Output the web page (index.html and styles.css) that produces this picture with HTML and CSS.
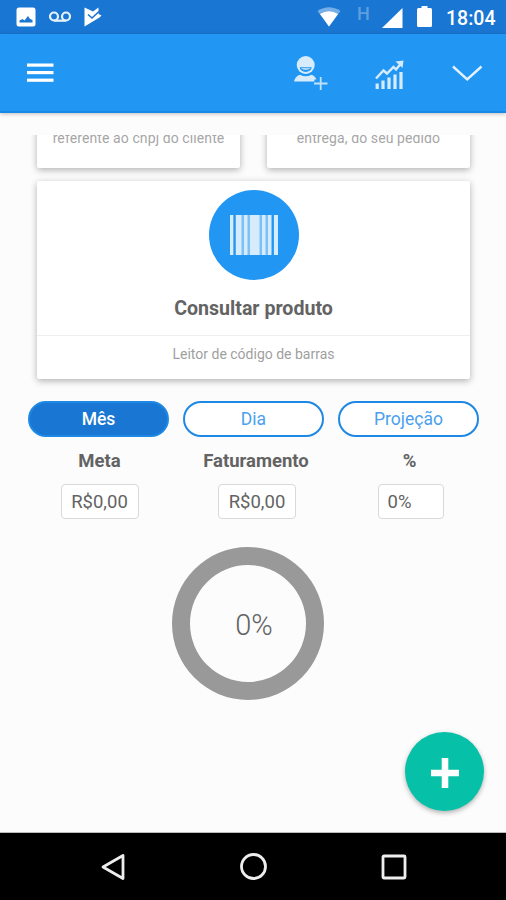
FILE: index.html
```html
<!DOCTYPE html>
<html lang="pt-BR">

  <head>
    <meta charset="UTF-8">
    <meta name="viewport" content="width=device-width, initial-scale=1.0">
    <title>Consultar produto</title>
    <link rel="stylesheet" href="styles.css">
  </head>

  <body>
    <div class="status-bar">
      <div class="status-left">
        <svg width="20" height="20" viewBox="0 0 20 20">
          <rect x="0.5" y="0.5" width="19" height="19" rx="2.5" fill="#fff"/>
          <path d="M3.5 15.5v-2L6.500 12l2 1.500L12 9l2 3 2.500 1v2.500z" fill="#1976d2"/>
        </svg>
        <svg width="22" height="12" viewBox="0 0 22 12" fill="none" stroke="#e8f2fc" stroke-width="2.200">
          <circle cx="5" cy="5.500" r="4"/>
          <circle cx="17" cy="5.500" r="4"/>
          <path d="M5 9.700h12"/>
        </svg>
        <svg width="18" height="20" viewBox="0 0 18 20">
          <path d="M0.500 0.500L9 4.500L14.500 0.500V7L17.500 8.500L15.500 10.500L0.500 19.500z" fill="#fff"/>
          <path d="M4 7.500l4 3.500L15 4.500" fill="none" stroke="#1976d2" stroke-width="1.600"/>
        </svg>
      </div>
      <div class="status-right">
        <svg width="24" height="20" viewBox="0 0 24 20">
          <path d="M0.500 4Q12-3.500 23.500 4L12 19.500z" fill="#75aee6"/>
          <path d="M3 7Q12 1.500 21 7L12 19.500z" fill="#fff"/>
        </svg>
        <span class="network">H</span>
        <svg class="signal" width="21" height="20" viewBox="0 0 21 20">
          <path d="M20.500 0V20H0z" fill="#fff"/>
        </svg>
        <svg class="battery" width="15" height="21" viewBox="0 0 15 21">
          <path d="M4.500 0h6v2H13.500a1.500 1.500 0 0 1 1.500 1.500V19.500a1.500 1.500 0 0 1-1.500 1.500H1.500A1.500 1.500 0 0 1 0 19.500V3.500A1.500 1.500 0 0 1 1.500 2H4.500z" fill="#fff"/>
        </svg>
        <span class="clock">18:04</span>
      </div>
    </div>

    <header>
      <svg width="27" height="20" viewBox="0 0 27 20" fill="#fff">
        <rect y="0.500" width="26.500" height="3.200"/>
        <rect y="8" width="26.500" height="3.200"/>
        <rect y="15.600" width="26.500" height="3.200"/>
      </svg>
      <div class="actions">
        <svg width="34" height="36" viewBox="0 0 34 36">
          <circle cx="11.700" cy="10" r="9" fill="#d6ecfd"/>
          <path d="M5.700 12.200h12a6 4.800 0 0 1-12 0z" fill="#2196f3"/>
          <path d="M6.700 13.200h10q-5 3.200-10 0z" fill="#d6ecfd"/>
          <path d="M0 26.500q1-5 6-6.800q5.700 3 11.400 0q4 1.500 5 4.800h-2v2z" fill="#d6ecfd"/>
          <path d="M20 28.500h13.500M26.700 22v13" stroke="#bfe1fc" stroke-width="1.800"/>
        </svg>
        <svg class="chart-icon" width="29" height="30" viewBox="0 0 29 30">
          <path d="M1 18.500L8.500 10.500L12 13.500L18.500 7L21 9.500L26 3.500" fill="none" stroke="#d6ecfd" stroke-width="2.400"/>
          <path d="M20.500 1.500L28.500 0.500L27.500 8z" fill="#d6ecfd"/>
          <path d="M2.200 23.500V29M8 20.500V29M14 17.500V29M20 14.500V29M26 12V29" stroke="#d6ecfd" stroke-width="3.200"/>
        </svg>
        <svg class="chevron" width="31" height="17" viewBox="0 0 31 17">
          <path d="M1 1.500L15.200 14.500L29.500 1.500" fill="none" stroke="#e3f2fe" stroke-width="2.400"/>
        </svg>
      </div>
    </header>

    <main>
      <section class="cards">
        <div class="card-row">
          <div class="card small">referente ao cnpj do cliente</div>
          <div class="card small">entrega, do seu pedido</div>
        </div>
        <div class="card product">
          <div class="barcode">
            <svg width="48" height="40" viewBox="0 0 48 40">
              <path d="M0 0h48v40H0z" fill="#7cc0f8"/>
              <path d="M0 0h3.500v40H0zM6 0h5.500v40H6zM14 0h3.500v40H14zM20 0h9.500v40H20zM32 0h3.500v40H32zM38 0h3.300v40H38zM44 0h4v40H44z" fill="#d6ecfd"/>
              <path d="M3.500 0h2v40h-2zM41.800 0h2v40h-2z" fill="#2196f3"/>
            </svg>
          </div>
          <h2>Consultar produto</h2>
          <p>Leitor de código de barras</p>
        </div>
      </section>

      <div class="tabs">
        <button class="selected">Mês</button>
        <button>Dia</button>
        <button>Projeção</button>
      </div>

      <div class="results">
        <div class="result">
          <h3>Meta</h3>
          <div class="value">R$0,00</div>
        </div>
        <div class="result middle">
          <h3>Faturamento</h3>
          <div class="value">R$0,00</div>
        </div>
        <div class="result">
          <h3>%</h3>
          <div class="value percent">0%</div>
        </div>
      </div>

      <div class="progress"><span>0%</span></div>

      <button class="add">
        <svg width="28" height="30" viewBox="0 0 28 30">
          <path d="M0 15h28M14 0v30" stroke="#fff" stroke-width="6.600"/>
        </svg>
      </button>
    </main>

    <nav>
      <svg width="26" height="28" viewBox="0 0 26 28">
        <path d="M3 14L23 2.500V25.500z"/>
      </svg>
      <svg width="28" height="28" viewBox="0 0 28 28">
        <circle cx="13.500" cy="13.500" r="12"/>
      </svg>
      <svg width="26" height="26" viewBox="0 0 26 26">
        <rect x="2" y="2" width="22" height="22" rx="1"/>
      </svg>
    </nav>
  </body>

</html>
```
FILE: styles.css
```css
* {
  box-sizing: border-box;
}

body {
  margin: 0;
  height: 900px;
  display: flex;
  flex-direction: column;
  overflow: hidden;
  font-family: Roboto, "Liberation Sans", sans-serif;
  color: #636363;
  background-color: #fcfcfc;
}

svg {
  display: block;
  flex: none;
}

h2, h3, p {
  margin: 0;
}

button {
  font-family: inherit;
  padding: 0;
}

.status-bar {
  height: 34px;
  padding: 0 10px 0 16px;
  display: flex;
  justify-content: space-between;
  align-items: center;
  background-color: #1976d2;
}

.status-left, .status-right {
  display: flex;
  align-items: center;
}

.status-left {
  gap: 13px;
}

.network {
  width: 12px;
  margin: 0 13px 7px 16px;
  font-size: 18px;
  font-weight: 500;
  color: #5f9fe0;
}

.battery {
  margin: 0 14px 1px 14px;
}

.signal {
  margin-top: 2px;
}

.clock {
  width: 50px;
  margin-top: 2px;
  font-size: 19.5px;
  font-weight: 500;
  color: #fff;
  white-space: nowrap;
}

header {
  height: 79px;
  padding: 0 23px 0 27px;
  display: flex;
  justify-content: space-between;
  align-items: center;
  background-color: #2196f3;
  border-bottom: 2px solid #1689e6;
  box-shadow: 0 1px 4px rgba(0, 0, 0, 0.25);
}

.actions {
  display: flex;
  align-items: center;
}

.chart-icon {
  margin: 4px 48px 0 47px;
}

.chevron {
  margin-top: 2px;
}

main {
  position: relative;
  height: 720px;
  padding: 22px 27px 0 28px;
  border-bottom: 1px solid #bbb;
}

.cards {
  height: 255px;
  padding: 0 9px 11px;
  display: flex;
  flex-direction: column;
  justify-content: flex-end;
  gap: 13px;
  overflow: hidden;
}

.card-row {
  display: flex;
  gap: 27px;
}

.card {
  background-color: #fff;
  border-radius: 2px;
  box-shadow: 0 2px 7px rgba(0, 0, 0, 0.3);
  text-align: center;
}

.small {
  flex: 1;
  height: 76px;
  padding-top: 37px;
  font-size: 14px;
  line-height: 18px;
  letter-spacing: 0.1px;
  color: #a6a6a6;
  white-space: nowrap;
}

.product {
  height: 198px;
  flex: none;
  padding-top: 9px;
}

.barcode {
  width: 90px;
  height: 90px;
  margin: 0 auto;
  display: flex;
  justify-content: center;
  align-items: center;
  border-radius: 50%;
  background-color: #2196f3;
}

.product h2 {
  height: 56px;
  line-height: 58px;
  font-size: 19.6px;
  font-weight: 700;
  border-bottom: 1px solid #eee;
}

.product p {
  line-height: 37px;
  font-size: 14px;
  color: #9f9f9f;
}

.tabs {
  display: flex;
  gap: 14px;
  margin-top: 11px;
}

.tabs button {
  flex: 1;
  height: 36px;
  border: 2px solid #1e88e5;
  border-radius: 18px;
  background-color: #fff;
  font-size: 17.5px;
  color: #4b9ff0;
}

.tabs .selected {
  background-color: #1976d2;
  font-weight: 500;
  color: #fff;
}

.results {
  display: grid;
  grid-template-columns: 1fr 1fr 1fr;
  gap: 14px;
}

.result {
  display: flex;
  flex-direction: column;
  align-items: center;
  padding-left: 2px;
}

.result.middle {
  padding-left: 5px;
}

.result h3 {
  height: 47px;
  line-height: 49px;
  font-size: 18.5px;
  font-weight: 700;
}

.value {
  width: 78px;
  height: 35px;
  border: 1px solid #d9d9d9;
  border-radius: 4px;
  background-color: #fff;
  line-height: 34px;
  font-size: 18.5px;
  text-align: center;
}

.middle .value {
  margin-left: 2px;
}

.value.percent {
  width: 66px;
  margin-left: 2px;
  padding-left: 9px;
  text-align: left;
}

.progress {
  width: 152px;
  height: 153px;
  margin: 28px 0 0 144px;
  padding: 3px 0 0 12px;
  display: flex;
  justify-content: center;
  align-items: center;
  border: 18px solid #999;
  border-radius: 50%;
  font-size: 29px;
  font-weight: 300;
}

.add {
  position: absolute;
  right: 22px;
  bottom: 21px;
  width: 79px;
  height: 79px;
  display: flex;
  justify-content: center;
  align-items: center;
  padding-top: 3px;
  border: none;
  border-radius: 50%;
  background-color: #06c1a7;
  box-shadow: 0 2px 5px rgba(0, 0, 0, 0.3);
}

nav {
  height: 67px;
  padding: 0 99px 0 100px;
  display: flex;
  justify-content: space-between;
  align-items: center;
  background-color: #000;
}

nav svg {
  fill: none;
  stroke: #eee;
  stroke-width: 2.8;
  stroke-linejoin: round;
}
```
